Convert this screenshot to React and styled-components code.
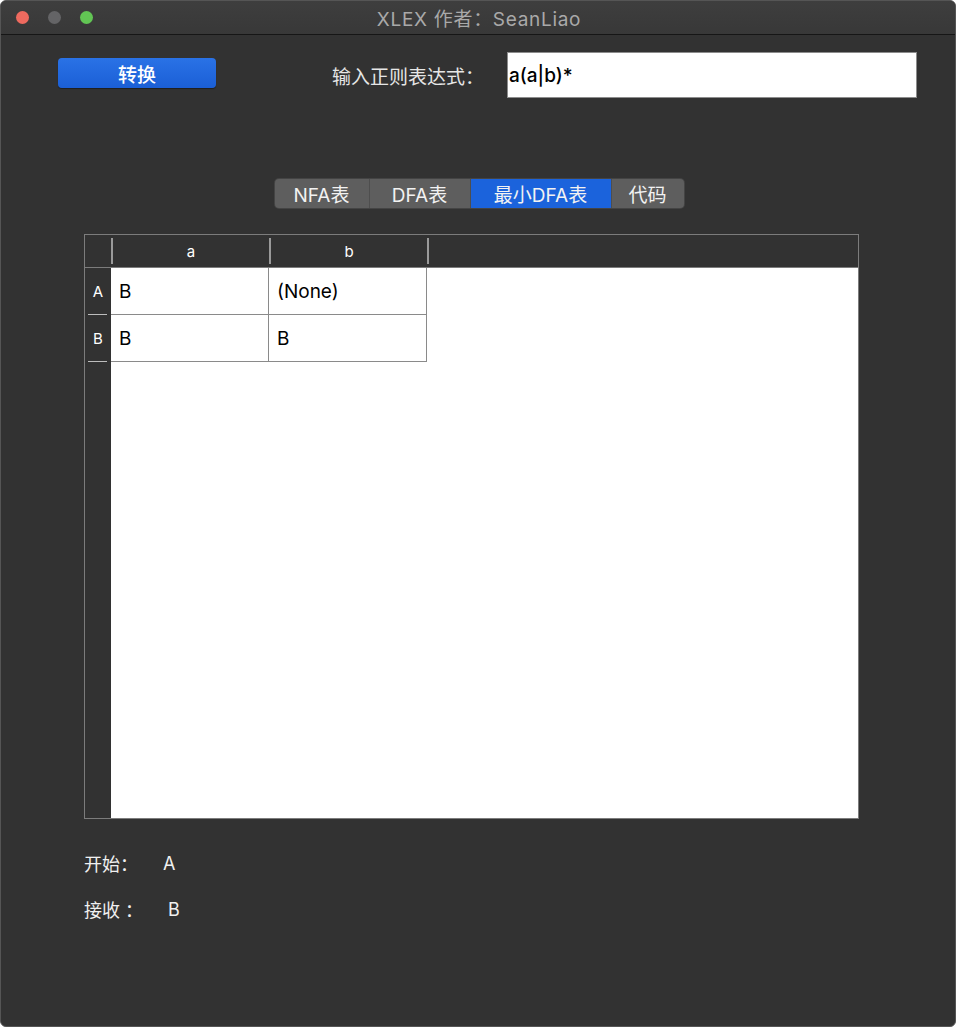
import styled, { createGlobalStyle } from "styled-components"

const GlobalStyle = createGlobalStyle`
    html, body {
        margin: 0;
        padding: 0;
        background: #ffffff;
    }
    body {
        font-family: "Inter", "Noto Sans CJK SC", sans-serif;
    }
`

const Window = styled.div`
    width: 956px;
    height: 1027px;
    box-sizing: border-box;
    background: #323232;
    border-radius: 6px;
    border: 1px solid #555;
    overflow: hidden;
    display: flex;
    flex-direction: column;
`

const TitleBar = styled.div`
    height: 33px;
    flex-shrink: 0;
    position: relative;
    display: flex;
    align-items: center;
    justify-content: center;
    background: linear-gradient(#3e3e3e, #383838);
    border-bottom: 1px solid #161616;
`

const Lights = styled.div`
    position: absolute;
    left: 15px;
    top: 10px;
    display: flex;
    gap: 19px;
`

const Light = styled.span`
    width: 13px;
    height: 13px;
    border-radius: 50%;
    background: ${p => p.color};
`

const Title = styled.div`
    font-size: 19px;
    letter-spacing: 0.7px;
    color: #a9a9a9;
    margin-left: 2px;
`

const Body = styled.div`
    flex: 1;
    display: flex;
    flex-direction: column;
`

const TopRow = styled.div`
    display: flex;
    align-items: center;
    padding: 17px 0 0 57px;
`

const ConvertButton = styled.button`
    width: 158px;
    height: 30px;
    margin-top: -4px;
    border: none;
    border-radius: 4px;
    background: linear-gradient(#2a72e6, #1b5fd6);
    box-shadow: 0 1px 1px rgba(0, 0, 0, 0.4);
    color: #ffffff;
    font-family: inherit;
    font-size: 19px;
    font-weight: 500;
    padding: 0;
`

const Label = styled.span`
    margin-left: 116px;
    color: #e6e6e6;
    font-size: 19px;
`

const RegexInput = styled.div`
    margin-left: 23px;
    width: 407px;
    height: 44px;
    background: #ffffff;
    border: 1px solid #8c8c8c;
    display: flex;
    align-items: center;
    padding-left: 1px;
    font-size: 19px;
    font-weight: 500;
    color: #000000;
`

const Tabs = styled.div`
    align-self: center;
    margin-top: 81px;
    margin-left: 2px;
    display: flex;
    height: 29px;
    border-radius: 4px;
    overflow: hidden;
    background: #5e5e5e;
    box-shadow: 0 0 0 1px #444;
`

const Tab = styled.div`
    width: ${p => p.w}px;
    display: flex;
    align-items: center;
    justify-content: center;
    font-size: 19px;
    color: #f2f2f2;
    background: ${p => (p.active ? "#1b63dc" : "transparent")};
    border-right: ${p => (p.last ? "none" : "1px solid #4e4e4e")};
    box-sizing: border-box;
`

const TableBox = styled.div`
    margin: 26px 0 0 83px;
    width: 775px;
    height: 585px;
    box-sizing: border-box;
    border: 1px solid #7c7c7c;
    display: grid;
    grid-template-columns: 26px 1fr;
    grid-template-rows: 33px 1fr;
    background: #323232;
`

const Corner = styled.div`
    border-bottom: 1px solid #7c7c7c;
`

const HeaderRow = styled.div`
    display: flex;
    border-bottom: 1px solid #7c7c7c;
`

const HeaderCell = styled.div`
    width: 158px;
    display: flex;
    align-items: center;
    justify-content: center;
    color: #ffffff;
    font-size: 15px;
    border-left: 2px solid #9a9a9a;
    margin: 3px 0;
    box-sizing: border-box;
    &:last-child {
        width: 2px;
    }
`

const RowHeads = styled.div`
    display: flex;
    flex-direction: column;
`

const RowHead = styled.div`
    height: 47px;
    display: flex;
    align-items: center;
    justify-content: center;
    color: #ffffff;
    font-size: 15px;
    position: relative;
    &::after {
        content: "";
        position: absolute;
        left: 3px;
        right: 4px;
        bottom: 0;
        height: 1px;
        background: #bdbdbd;
    }
`

const Grid = styled.div`
    background: #ffffff;
`

const Row = styled.div`
    display: flex;
`

const Cell = styled.div`
    width: 158px;
    height: 47px;
    box-sizing: border-box;
    border-right: 1px solid #8a8a8a;
    border-bottom: 1px solid #8a8a8a;
    display: flex;
    align-items: center;
    padding-left: 8px;
    font-size: 19px;
    color: #000000;
`

const Info = styled.div`
    margin: 33px 0 0 83px;
    display: flex;
    flex-direction: column;
    gap: 24px;
`

const InfoLine = styled.div`
    display: flex;
    align-items: center;
    color: #f0f0f0;
    font-size: 18px;
    height: 22px;
`

const InfoValue = styled.span`
    margin-left: ${p => p.gap}px;
`

const tabs = [
    { name: "NFA表", w: 95 },
    { name: "DFA表", w: 101 },
    { name: "最小DFA表", w: 141, active: true },
    { name: "代码", w: 72, last: true },
]

const rows = [
    { name: "A", a: "B", b: "(None)" },
    { name: "B", a: "B", b: "B" },
]

export default function App() {
    return (
        <>
            <GlobalStyle />
            <Window>
                <TitleBar>
                    <Lights>
                        <Light color="#ee6a5f" />
                        <Light color="#646466" />
                        <Light color="#62c554" />
                    </Lights>
                    <Title>XLEX 作者：SeanLiao</Title>
                </TitleBar>
                <Body>
                    <TopRow>
                        <ConvertButton>转换</ConvertButton>
                        <Label>输入正则表达式：</Label>
                        <RegexInput>a(a|b)*</RegexInput>
                    </TopRow>
                    <Tabs>
                        {tabs.map(t => (
                            <Tab key={t.name} w={t.w} active={t.active} last={t.last}>{t.name}</Tab>
                        ))}
                    </Tabs>
                    <TableBox>
                        <Corner />
                        <HeaderRow>
                            <HeaderCell>a</HeaderCell>
                            <HeaderCell>b</HeaderCell>
                            <HeaderCell />
                        </HeaderRow>
                        <RowHeads>
                            {rows.map(r => <RowHead key={r.name}>{r.name}</RowHead>)}
                        </RowHeads>
                        <Grid>
                            {rows.map(r => (
                                <Row key={r.name}>
                                    <Cell>{r.a}</Cell>
                                    <Cell>{r.b}</Cell>
                                </Row>
                            ))}
                        </Grid>
                    </TableBox>
                    <Info>
                        <InfoLine>开始：<InfoValue gap={25}>A</InfoValue></InfoLine>
                        <InfoLine>接收 ：<InfoValue gap={25}>B</InfoValue></InfoLine>
                    </Info>
                </Body>
            </Window>
        </>
    )
}
